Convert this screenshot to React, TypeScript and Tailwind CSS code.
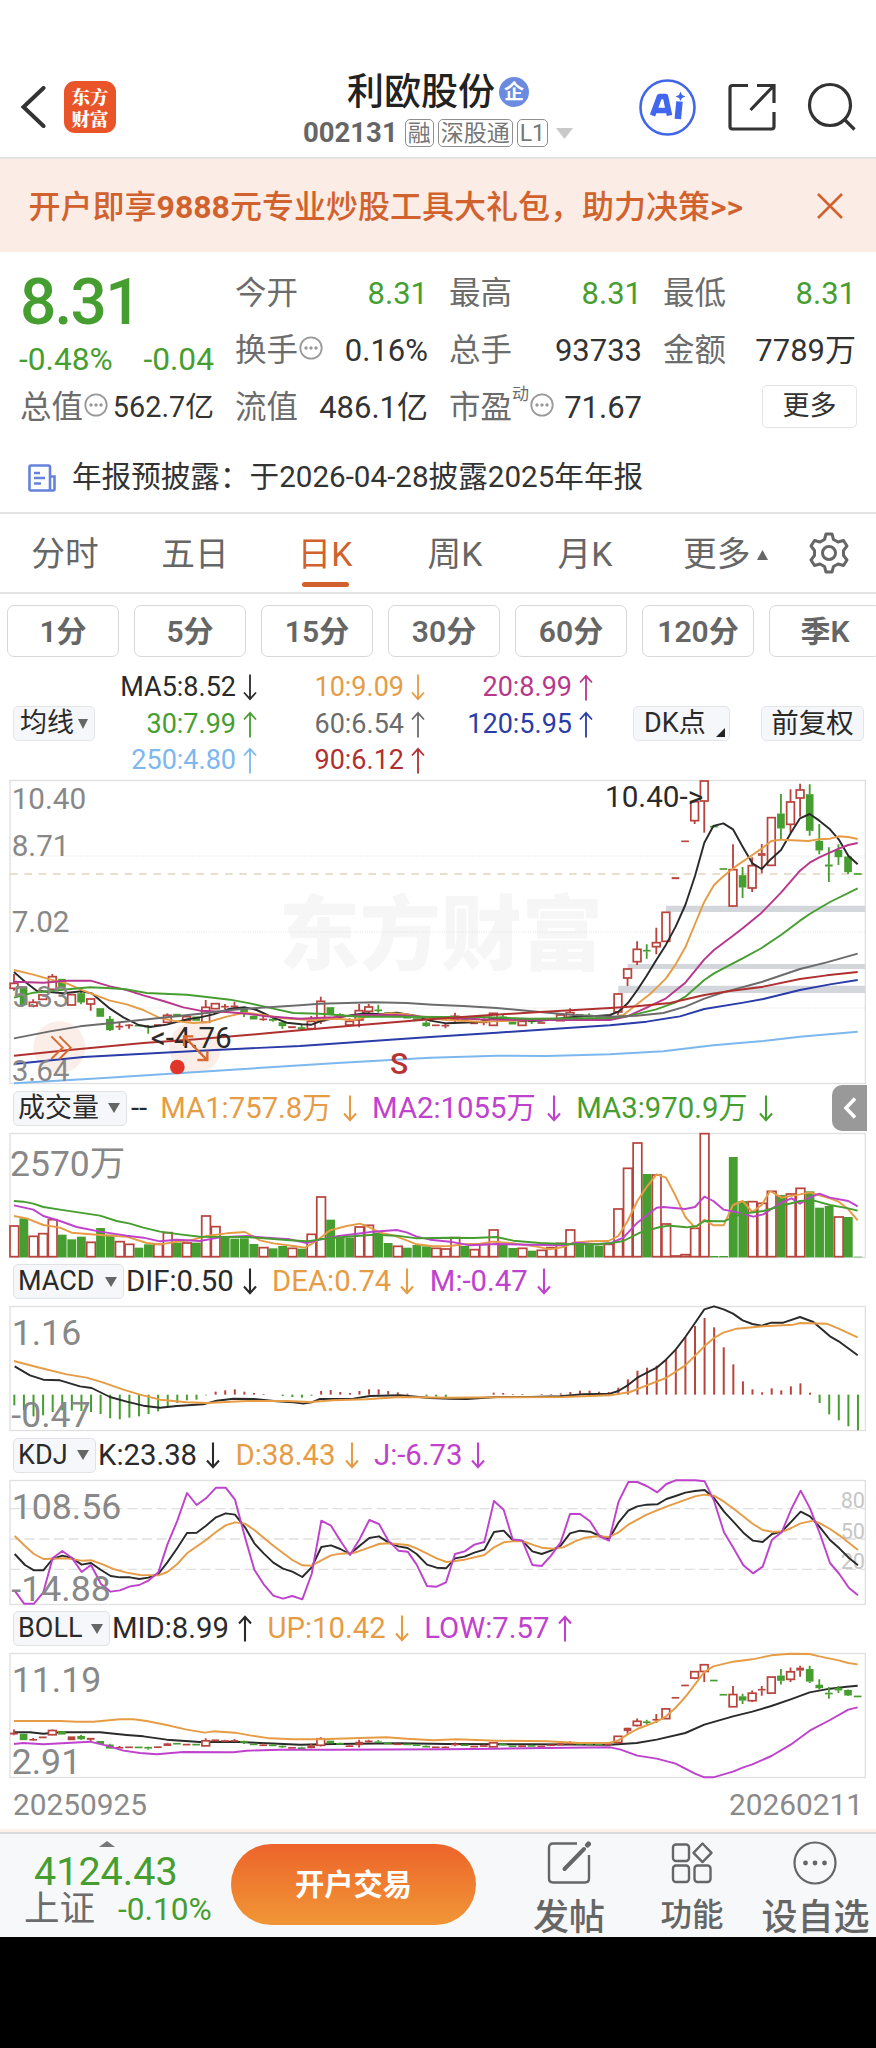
import React from "react";

const GREEN = "#479e30";
const RED = "#b8443e";
const INK = "#2a2a2a";
const ORANGE = "#e69c45";
const VIOLET = "#bf42cd";

const X0 = 42;
const STEP = 28.76;
const cx = (i: number) => X0 + i * STEP;

type Candle = [0 | 1, number, number, number?, number?];

// [rising, bodyTop, bodyBottom, high, low]
const candles: Candle[] = [
  [1, 640, 655, 612, 662], [0, 650, 705], [1, 697, 708, 688, 712], [1, 675, 688], [1, 620, 658, 612, 662],
  [0, 627, 655], [1, 674, 705], [0, 670, 697, 660, 703], [1, 687, 702, 686, 722], [0, 715, 740],
  [0, 747, 780, 738, 783], [1, 768, 771, 758, 780], [1, 764, 768, 762, 776], [0, 765, 768], [0, 768, 771, 765, 791],
  [1, 763, 768], [1, 736, 757, 730, 757], [0, 732, 741], [1, 740, 751], [0, 740, 752],
  [1, 712, 757, 690, 758], [1, 701, 716], [1, 708, 712, 702, 717], [1, 707, 711, 695, 715], [0, 714, 728, 712, 741],
  [0, 738, 748], [1, 746, 750, 737, 752], [0, 747, 752, 743, 755], [0, 757, 768, 753, 776], [1, 769, 774],
  [0, 772, 778, 765, 780], [1, 754, 776, 738, 778], [1, 694, 752, 680, 762], [0, 712, 734], [0, 733, 741, 730, 742],
  [1, 754, 765, 745, 768], [1, 722, 750, 702, 772], [1, 711, 724, 702, 730], [0, 719, 723, 704, 728], [0, 728, 738],
  [1, 737, 740], [0, 738, 745], [0, 745, 752], [0, 758, 768, 753, 770], [1, 764, 767],
  [1, 765, 768, 760, 775], [1, 739, 749, 728, 760], [0, 745, 753], [1, 758, 762], [1, 753, 759, 745, 766],
  [1, 730, 766], [0, 740, 748, 735, 750], [0, 755, 763], [1, 754, 766], [0, 752, 756, 748, 762],
  [1, 757, 760], [1, 746, 752], [1, 735, 752], [1, 728, 742, 715, 745], [0, 733, 742],
  [0, 735, 742, 730, 742], [0, 737, 744], [1, 737, 745], [1, 672, 726, 670, 735], [1, 597, 624, 595, 648],
  [1, 538, 575, 514, 585], [0, 540, 544, 523, 566], [1, 518, 530, 473, 553], [1, 427, 514], [1, 322, 327],
  [1, 212, 216], [1, 95, 152, 92, 162], [1, 33, 93, 33, 188], [0, 168, 172], [0, 295, 299],
  [1, 299, 408, 223, 408], [0, 316, 352, 291, 384], [1, 287, 354, 262, 366], [1, 250, 257, 222, 310], [1, 143, 286],
  [0, 131, 175, 72, 210], [1, 96, 163, 58, 188], [1, 60, 84, 41, 140], [0, 73, 182, 43, 197], [0, 213, 241, 162, 253],
  [0, 284, 289, 232, 336], [0, 240, 261, 223, 285], [0, 260, 306, 255, 312], [0, 310, 314],
];

const volumes: [0 | 1, number][] = [
  [1, 435], [0, 412], [1, 466], [1, 458], [1, 416], [0, 461], [0, 475], [0, 467], [1, 484], [0, 441],
  [0, 461], [1, 482], [1, 490], [0, 500], [0, 490], [1, 490], [1, 455], [0, 485], [1, 486], [0, 485],
  [1, 405], [1, 437], [0, 470], [0, 473], [0, 472], [0, 489], [1, 500], [0, 502], [0, 495], [1, 502],
  [0, 503], [1, 460], [1, 348], [0, 416], [0, 470], [0, 470], [1, 438], [1, 433], [0, 455], [0, 486],
  [1, 496], [0, 500], [0, 492], [0, 496], [1, 502], [1, 504], [1, 470], [0, 495], [1, 506], [1, 490],
  [1, 447], [0, 490], [0, 501], [1, 502], [0, 509], [1, 508], [1, 500], [1, 487], [1, 447], [0, 485],
  [0, 490], [0, 494], [1, 490], [1, 384], [1, 262], [1, 186], [0, 279], [1, 282], [1, 429], [1, 525],
  [1, 521], [1, 442], [1, 158], [0, 525], [0, 525], [0, 228], [0, 360], [1, 362], [1, 367], [1, 331],
  [0, 342], [1, 339], [1, 322], [0, 331], [0, 380], [0, 375], [1, 408], [0, 408], [0, 527],
];

const macdBars = [
  975, 990, 1008, 1005, 995, 990, 990, 992, 995, 1001, 1014, 1017, 1012, 1008, 1001, 993, 977, 968, 960, 958,
  945, 934, 930, 927, 934, 938, 941, 943, 947, 950, 952, 946, 932, 929, 935, 938, 932, 927, 927, 932,
  936, 940, 943, 947, 949, 950, 943, 943, 943, 943, 937, 938, 941, 941, 943, 941, 941, 939, 935, 931,
  931, 934, 935, 922, 897, 871, 862, 856, 838, 808, 770, 737, 713, 741, 801, 852, 903, 927, 936, 924,
  930, 918, 909, 937, 968, 1002, 1020, 1038, 1050,
];

const lines = {
  ma5: "42,606 75,635 110,662 190,670 245,664 275,670 330,716 370,742 416,765 450,771 500,764 560,748 600,742 640,733 690,716 735,712 770,720 818,742 860,758 905,763 935,764 960,754 1000,745 1050,736 1090,730 1140,733 1190,728 1250,738 1290,752 1340,760 1440,756 1480,745 1540,750 1620,752 1690,745 1750,738 1790,738 1830,735 1855,725 1883,700 1912,660 1940,617 1969,570 1998,524 2027,470 2056,405 2085,318 2113,218 2140,168 2170,160 2199,178 2228,230 2257,280 2285,297 2310,270 2343,240 2372,190 2400,145 2429,132 2458,152 2490,178 2516,208 2545,257 2573,283",
  ma10: "42,600 100,614 150,628 200,640 250,662 330,692 380,703 430,720 480,744 520,752 580,759 625,756 680,740 735,728 790,735 850,745 930,750 1010,746 1060,750 1110,738 1170,730 1220,733 1270,742 1340,750 1440,755 1590,750 1750,748 1830,745 1870,735 1912,702 1955,668 1998,625 2027,583 2056,532 2085,462 2113,395 2142,345 2171,318 2210,287 2257,255 2285,236 2314,213 2343,209 2425,213 2455,208 2490,206 2516,199 2545,201 2573,207",
  ma20: "42,635 130,638 200,632 272,632 330,649 380,660 430,676 490,693 550,712 600,722 680,726 740,731 800,739 900,746 1000,742 1080,735 1190,735 1290,742 1440,748 1590,750 1730,750 1830,750 1880,740 1940,713 1998,685 2056,638 2113,568 2142,540 2199,497 2228,475 2285,428 2343,368 2400,302 2429,278 2458,262 2516,236 2545,225 2573,219",
  ma30: "42,683 100,668 180,660 270,652 320,654 380,658 440,669 560,674 620,681 690,689 750,700 820,716 880,729 960,731 1080,740 1190,740 1340,741 1440,741 1590,746 1830,744 1890,737 1969,718 2027,697 2056,680 2113,630 2142,610 2199,580 2228,565 2285,534 2343,495 2400,452 2429,432 2490,396 2573,355",
  ma60: "42,805 150,784 240,769 330,760 500,742 600,731 700,719 770,714 900,706 960,701 1120,697 1220,699 1300,704 1390,708 1490,714 1620,726 1720,735 1830,740 1910,737 1990,729 2056,710 2113,686 2170,667 2285,636 2400,597 2480,577 2573,551",
  ma90: "42,857 200,841 430,819 600,807 800,790 1000,772 1190,756 1300,747 1440,737 1620,726 1830,714 1910,709 2010,699 2113,675 2190,663 2290,650 2400,627 2480,616 2573,606",
  ma120: "42,882 250,861 600,842 900,828 1290,801 1490,788 1690,775 1830,766 1940,755 2040,739 2113,717 2230,698 2290,687 2400,660 2490,643 2573,630",
  ma250: "42,940 300,925 650,902 1000,880 1290,863 1490,857 1640,858 1830,853 1990,844 2140,826 2290,813 2400,800 2573,785",
  vol1: "42,405 80,412 130,432 180,440 215,455 300,462 380,467 440,486 480,490 520,484 570,478 620,465 680,457 735,453 780,478 820,487 880,495 915,500 950,480 990,448 1040,435 1080,428 1110,440 1140,455 1180,463 1220,478 1250,490 1300,496 1350,495 1390,490 1440,488 1480,482 1540,487 1610,497 1650,505 1690,498 1720,485 1770,481 1825,480 1855,465 1883,420 1912,360 1940,318 1970,280 1998,290 2027,345 2056,408 2085,440 2113,416 2140,433 2171,433 2199,372 2228,360 2257,393 2285,372 2310,330 2345,350 2400,340 2429,334 2455,342 2490,352 2516,362 2545,385 2573,418",
  vol2: "42,373 100,386 130,405 180,420 230,438 300,452 380,464 430,470 480,481 530,476 600,480 660,469 740,465 800,470 870,475 920,486 960,476 1010,466 1060,460 1120,452 1190,447 1220,454 1250,467 1290,476 1350,482 1410,493 1490,489 1590,491 1690,493 1730,485 1790,490 1830,487 1870,470 1912,425 1970,380 1990,378 2056,384 2085,378 2113,347 2140,360 2171,386 2215,395 2260,407 2290,400 2314,384 2350,362 2375,352 2400,368 2429,350 2458,338 2490,350 2545,360 2573,376",
  vol3: "42,360 70,362 100,368 130,378 180,386 300,404 350,420 390,428 430,440 480,452 540,460 600,467 740,468 870,478 920,481 960,475 1040,467 1120,461 1190,464 1250,472 1350,470 1420,471 1490,468 1540,479 1620,486 1710,490 1790,490 1830,487 1870,480 1920,455 1980,438 2010,434 2060,439 2090,435 2113,420 2171,421 2220,400 2250,395 2290,390 2343,375 2400,360 2440,358 2490,372 2545,382 2573,389",
  dif: "44,858 90,885 130,898 180,900 240,918 275,923 330,950 380,964 430,976 480,982 530,977 610,972 650,961 700,955 760,956 830,963 880,966 910,970 935,966 960,956 1060,955 1110,947 1200,945 1290,953 1350,955 1400,956 1490,950 1590,950 1680,948 1750,942 1830,940 1855,932 1883,915 1912,892 1970,862 1998,838 2027,808 2056,770 2085,728 2113,687 2142,678 2171,687 2199,700 2228,720 2257,731 2285,736 2314,727 2350,727 2400,710 2440,725 2490,768 2516,783 2573,825",
  dea: "42,842 110,860 200,882 260,892 310,907 370,928 420,943 480,958 560,966 620,968 740,962 860,962 930,965 1000,960 1100,957 1200,950 1340,952 1490,951 1690,950 1830,945 1890,935 1940,915 1998,893 2056,855 2113,798 2142,773 2170,757 2210,745 2290,738 2380,733 2400,728 2480,730 2516,745 2573,771",
  j: "44,480 72,519 102,519 130,485 158,382 187,361 216,382 245,424 273,403 303,460 332,483 360,479 390,467 418,463 445,450 475,425 502,342 532,270 561,187 590,223 618,203 648,171 677,171 705,207 735,320 763,417 791,461 820,495 849,504 877,496 907,506 935,430 964,270 993,285 1021,330 1050,373 1079,325 1108,268 1137,280 1165,330 1195,360 1223,363 1250,402 1281,466 1310,468 1338,455 1365,370 1394,362 1423,342 1453,334 1482,211 1511,237 1538,326 1567,330 1597,403 1625,406 1653,375 1682,335 1710,250 1740,250 1770,272 1800,318 1827,330 1856,212 1885,154 1912,154 1940,166 1972,185 1999,160 2027,149 2085,149 2114,152 2142,210 2172,305 2202,355 2230,404 2259,428 2288,408 2316,327 2345,305 2374,235 2402,180 2430,233 2460,310 2490,397 2518,430 2547,472 2574,494",
  k: "44,370 75,403 102,419 130,419 158,385 187,375 216,382 245,402 273,397 303,418 332,436 360,440 390,440 418,445 445,441 475,430 502,395 532,352 561,307 590,306 618,285 648,260 677,248 705,252 735,290 763,338 791,368 820,396 849,414 877,423 907,439 935,410 964,349 993,344 1021,355 1050,370 1079,345 1108,322 1137,317 1165,335 1195,347 1223,352 1250,370 1281,402 1310,411 1338,413 1365,383 1394,378 1423,366 1453,357 1482,304 1511,300 1538,328 1567,330 1597,362 1625,370 1653,360 1682,345 1710,308 1740,300 1770,303 1800,316 1827,325 1856,275 1885,240 1912,227 1940,222 1972,221 1999,205 2027,196 2056,186 2085,181 2114,178 2142,202 2172,243 2202,275 2230,306 2259,330 2288,334 2316,310 2345,303 2374,273 2402,243 2430,257 2460,290 2490,328 2518,353 2547,382 2574,404",
  d: "44,316 75,346 102,370 130,385 200,383 245,390 275,389 310,402 340,415 380,426 420,433 475,434 502,424 532,400 561,368 618,328 648,304 677,284 705,275 735,279 763,298 820,345 877,388 907,404 935,405 964,389 993,374 1021,369 1060,367 1090,357 1137,340 1165,338 1223,343 1250,353 1310,383 1340,394 1394,387 1453,373 1482,350 1511,335 1538,332 1567,331 1597,342 1625,351 1660,354 1690,350 1725,332 1755,321 1790,317 1827,319 1856,305 1885,282 1940,252 1999,228 2085,197 2114,192 2142,195 2172,213 2202,235 2259,280 2288,298 2320,304 2350,302 2374,292 2402,278 2440,270 2460,278 2490,295 2518,314 2574,358",
  up: "42,872 180,872 230,874 280,874 360,867 400,867 440,872 500,884 560,898 615,907 640,903 705,907 750,915 810,924 880,927 960,927 1080,923 1160,921 1220,925 1300,930 1370,927 1490,931 1640,933 1740,938 1830,937 1855,930 1883,912 1912,896 1970,874 1998,858 2027,832 2056,800 2085,762 2113,725 2140,708 2199,694 2257,687 2314,675 2370,670 2429,671 2458,678 2516,690 2545,698 2573,702",
  mid: "42,906 90,906 130,910 180,906 300,906 380,914 430,918 500,928 600,935 700,934 800,939 900,943 1000,941 1200,939 1340,941 1590,942 1830,943 1910,938 1970,928 2056,908 2113,883 2199,858 2257,844 2314,827 2372,807 2429,786 2490,775 2540,769 2573,766",
  low: "42,941 70,938 130,942 200,938 270,934 320,946 370,961 420,968 470,972 550,965 700,966 740,961 840,958 1000,958 1340,957 1490,955 1830,951 1860,957 1912,976 1970,985 2027,1000 2085,1030 2113,1041 2140,1041 2199,1024 2228,1012 2257,1002 2314,977 2372,943 2429,901 2490,869 2545,838 2573,831",
};

function Line({ points, color, w = 5.8 }: { points: string; color: string; w?: number }) {
  return <polyline points={points} fill="none" stroke={color} strokeWidth={w} strokeLinejoin="round" />;
}

function Plot({ top, height, children }: { top: number; height: number; children: React.ReactNode }) {
  return (
    <svg
      viewBox={`0 ${top} 2628 ${height * 3}`}
      width="876"
      height={height}
      className="block shrink-0 overflow-visible"
      fontFamily="Roboto, 'Noto Sans CJK SC', sans-serif"
    >
      <rect x="30" y={top + 1.5} width="2566" height={height * 3 - 3} fill="none" stroke="#e0e0e0" strokeWidth="4" />
      {children}
    </svg>
  );
}

function Candles({ map, minHollow }: { map: (y: number) => number; minHollow: number }) {
  return (
    <g>
      {candles.map(([up, a, b, hi, lo], i) => {
        const t = map(a);
        const h = Math.max(map(b) - t, 4);
        const c = up ? RED : GREEN;
        const x = cx(i);
        const hollow = up === 1 && h > minHollow;
        return (
          <g key={i}>
            {hi !== undefined && lo !== undefined && (
              <path d={`M${x} ${map(hi)}V${t}M${x} ${t + h}V${map(lo)}`} stroke={c} strokeWidth="5.500" />
            )}
            {hollow ? (
              <rect x={x - 11.5} y={t} width="23" height={h} fill="#fff" stroke={c} strokeWidth="5.200" />
            ) : (
              <rect x={x - 11.5} y={t - 0.5} width="23" height={h + 1} fill={c} />
            )}
          </g>
        );
      })}
    </g>
  );
}

function Arrow({ up, small }: { up?: boolean; small?: boolean }) {
  return (
    <svg width="14" height="27" viewBox="0 0 14 27" fill="none" stroke="currentColor" strokeWidth={small ? 1.8 : 2.1} className="shrink-0">
      {up ? <path d="M7 26.5V1.5M1 8.5L7 1.8L13 8.5" /> : <path d="M7 .5V25.5M1 18.5L7 25.2L13 18.5" />}
    </svg>
  );
}

function MoreDots() {
  return (
    <svg width="24" height="24" viewBox="0 0 24 24" className="-mt-[5px] ml-px shrink-0">
      <circle cx="12" cy="12" r="10.700" fill="none" stroke="#999" strokeWidth="1.800" />
      <circle cx="7" cy="12" r="1.700" fill="#999" />
      <circle cx="12" cy="12" r="1.700" fill="#999" />
      <circle cx="17" cy="12" r="1.700" fill="#999" />
    </svg>
  );
}

function Tag({ children }: { children: React.ReactNode }) {
  return (
    <span className="flex h-[28px] shrink-0 items-center rounded-[5px] border-[1.5px] border-[#8f8f8f] px-[2px] text-[23px] whitespace-nowrap text-[#777]">
      {children}
    </span>
  );
}

function Header() {
  return (
    <header className="flex h-[159px] shrink-0 items-start border-b-2 border-[#e2e2e2] pt-[68px]">
      <div className="flex h-[78px] w-[300px] items-center pl-[20px]">
        <svg width="26" height="42" viewBox="0 0 26 42" fill="none" stroke="#333" strokeWidth="4" strokeLinecap="round">
          <path d="M23.500 2L3.500 21L23.500 40" />
        </svg>
        <div className="ml-[18px] flex h-[52px] w-[52px] flex-col items-center justify-center rounded-[11px] bg-[#e95529] font-['Noto_Serif_CJK_SC','Noto_Sans_CJK_SC',serif] text-[18.500px] leading-[22px] font-black text-white">
          <span>东方</span>
          <span>财富</span>
        </div>
      </div>
      <div className="flex w-[276px] flex-col items-center">
        <div className="flex h-[46px] items-center gap-[4px] pt-[3px]">
          <h1 className="text-[37px] font-medium text-[#222]">利欧股份</h1>
          <span className="-mt-[2px] flex h-[30px] w-[30px] items-center justify-center rounded-full bg-[#6a8be0] text-[20px] font-bold text-white">企</span>
        </div>
        <div className="flex h-[36px] items-center gap-[4px] pt-[2px]">
          <span className="mr-[3px] text-[27.500px] font-bold text-[#666]">002131</span>
          <Tag>融</Tag>
          <Tag>深股通</Tag>
          <Tag>L1</Tag>
          <svg width="17" height="11" viewBox="0 0 17 11" className="ml-[4px]"><path d="M0 0H17L8.500 11Z" fill="#c9c9c9" /></svg>
        </div>
      </div>
      <div className="flex h-[78px] flex-1 items-center pl-[62.500px]">
        <svg width="57" height="57" viewBox="0 0 57 57">
          <circle cx="28.500" cy="28.500" r="27" fill="#fff" stroke="#4167e6" strokeWidth="2.600" />
          <path d="M13.500 36.500L20.500 17.500H26.500L30.500 36.500M17 31.500H29" fill="none" stroke="#4167f0" strokeWidth="5.600" strokeLinejoin="round" />
          <path d="M40.500 22.500L38.800 40" stroke="#4167f0" strokeWidth="6.500" />
          <path d="M41.500 12.500L43 16L46.500 17.500L43 19L41.500 22L40 19L36.500 17.500L40 16Z" fill="#4167f0" />
        </svg>
        <svg width="48" height="48" viewBox="0 0 48 48" fill="none" stroke="#333" strokeWidth="3.200" className="ml-[32px]">
          <path d="M20 2.500H4.500Q2 2.500 2 5V43.500Q2 46 4.500 46H43.500Q46 46 46 43.500V29M29 2.500H46V20M45 3.500L22.500 27" />
        </svg>
        <svg width="50" height="50" viewBox="0 0 50 50" fill="none" stroke="#333" strokeWidth="3.200" className="ml-[31px]">
          <circle cx="23" cy="23" r="20.500" />
          <path d="M37.500 37.500L47.500 47.500" />
        </svg>
      </div>
    </header>
  );
}

function Banner() {
  return (
    <div className="flex h-[93px] shrink-0 items-center justify-between bg-[#fbece5] pr-[33px] pl-[28.500px] text-[#d1622d]">
      <span className="pt-[2px] text-[32px] font-medium whitespace-nowrap">
        开户即享<span className="font-bold">9888</span>元专业炒股工具大礼包，助力决策&gt;&gt;
      </span>
      <svg width="26" height="26" viewBox="0 0 26 26" fill="none" stroke="currentColor" strokeWidth="2.600">
        <path d="M1 1L25 25M25 1L1 25" />
      </svg>
    </div>
  );
}

function Stat({ label, value, green, dots, sup }: { label: string; value: string; green?: boolean; dots?: boolean; sup?: string }) {
  return (
    <div className="flex h-[57px] w-[193px] items-center">
      <span className="text-[31.500px] text-[#6c6c6c]">{label}</span>
      {sup && <span className="-mt-[26px] text-[17px] text-[#6c6c6c]">{sup}</span>}
      {dots && <MoreDots />}
      <span className={green ? "ml-auto text-[31px] text-[#479e30]" : "ml-auto text-[31px] text-[#333]"}>{value}</span>
    </div>
  );
}

function Quote() {
  return (
    <section className="h-[262px] shrink-0 border-b-2 border-[#e2e2e2]">
      <div className="flex h-[189px] pt-[13px] pl-[20px]">
        <div className="w-[194px] shrink-0">
          <div className="flex h-[76px] items-center text-[64px] font-medium tracking-[-1.8px] text-[#479e30]">8.31</div>
          <div className="-ml-[1px] flex h-[38px] items-center justify-between text-[31.700px] text-[#479e30]">
            <span>-0.48%</span>
            <span>-0.04</span>
          </div>
          <div className="flex h-[57px] items-center">
            <span className="text-[31.500px] text-[#6c6c6c]">总值</span>
            <MoreDots />
            <span className="ml-auto text-[28.800px] text-[#333]">562.7亿</span>
          </div>
        </div>
        <div className="ml-[21px] flex flex-col">
          <div className="flex gap-[21px]">
            <Stat label="今开" value="8.31" green />
            <Stat label="最高" value="8.31" green />
            <Stat label="最低" value="8.31" green />
          </div>
          <div className="flex gap-[21px]">
            <Stat label="换手" value="0.16%" dots />
            <Stat label="总手" value="93733" />
            <Stat label="金额" value="7789万" />
          </div>
          <div className="flex items-center gap-[21px]">
            <Stat label="流值" value="486.1亿" />
            <Stat label="市盈" value="71.67" dots sup="动" />
            <button className="-mt-[2px] ml-[99px] flex h-[43px] w-[95px] items-center justify-center rounded-[5px] border-[1.5px] border-[#e4e4e4] text-[27px] text-[#333]">更多</button>
          </div>
        </div>
      </div>
      <div className="flex h-[72px] items-center pt-[2px] pl-[28px]">
        <svg width="28" height="28" viewBox="0 0 28 28" fill="none" stroke="#6482dc" strokeWidth="2.600">
          <path d="M22 26.500H3Q1.500 26.500 1.500 25V3Q1.500 1.500 3 1.500H20.500Q22 1.500 22 3V26.500H25Q26.500 26.500 26.500 25V12.500H22M6 9H12M6 14H17M6 19.500H13" />
        </svg>
        <span className="ml-[16px] text-[29.600px] whitespace-nowrap text-[#333]">年报预披露：于2026-04-28披露2025年年报</span>
      </div>
    </section>
  );
}

function Tabs() {
  return (
    <nav className="flex h-[80px] shrink-0 border-b-2 border-[#e2e2e2] text-[33.700px] text-[#666]">
      {["分时", "五日", "日K", "周K", "月K"].map((t) => (
        <div key={t} className={t === "日K" ? "flex w-[130px] flex-col items-center text-[#d1622d]" : "flex w-[130px] flex-col items-center"}>
          <span className="flex h-[68px] items-center pt-[13px]">{t}</span>
          {t === "日K" && <span className="h-[5px] w-[47px] rounded-full bg-[#d1622d]" />}
        </div>
      ))}
      <div className="ml-[33px] flex h-[68px] items-center gap-[7px] pt-[13px]">
        <span>更多</span>
        <svg width="11" height="10" viewBox="0 0 11 10"><path d="M0 10H11L5.500 0Z" fill="#666" /></svg>
      </div>
      <svg width="42" height="42" viewBox="0 0 42 42" className="mt-[18px] ml-[40px]" fill="none" stroke="#666" strokeWidth="3" strokeLinejoin="round">
        <path d="M18 2H24L25.500 7.500L30 10L35.500 8.500L39 14L35.500 18.500V23.500L39 28L35.500 33.500L30 32L25.500 34.500L24 40H18L16.500 34.500L12 32L6.500 33.500L3 28L6.500 23.500V18.500L3 14L6.500 8.500L12 10L16.500 7.500Z" />
        <circle cx="21" cy="21" r="6.500" />
      </svg>
    </nav>
  );
}

function Periods() {
  return (
    <div className="flex h-[73px] shrink-0 gap-[15px] overflow-hidden pt-[11px] pl-[7px]">
      {["1分", "5分", "15分", "30分", "60分", "120分", "季K"].map((p) => (
        <button key={p} className="flex h-[52px] w-[112px] shrink-0 items-center justify-center rounded-[7px] border-[1.5px] border-[#d8d8d8] pt-[2px] text-[30px] font-bold text-[#666]">
          <span className="[font-weight:600]">{p}</span>
        </button>
      ))}
    </div>
  );
}

const averages: [string, boolean, string][] = [
  ["MA5:8.52", false, "text-[#2a2a2a]"],
  ["10:9.09", false, "text-[#e69c45]"],
  ["20:8.99", true, "text-[#b8378c]"],
  ["30:7.99", true, "text-[#479e30]"],
  ["60:6.54", true, "text-[#6c6c6c]"],
  ["120:5.95", true, "text-[#2a3ca8]"],
  ["250:4.80", true, "text-[#7cb8ee]"],
  ["90:6.12", true, "text-[#b03030]"],
];

function Averages() {
  return (
    <div className="flex h-[113px] shrink-0 items-center">
      <button className="ml-[13px] flex h-[35px] w-[82px] items-center justify-center gap-[4px] rounded-[5px] border border-[#e3e5e9] bg-[#f6f7fa] text-[27px] text-[#2a2a2a]">
        均线
        <svg width="10" height="10" viewBox="0 0 10 10"><path d="M0 0H10L5 10Z" fill="#666" /></svg>
      </button>
      <div className="grid w-[499px] grid-cols-[162px_168px_168px] pt-px text-[27px]">
        {averages.map(([t, up, c]) => (
          <span key={t} className={`flex h-[36.500px] items-center justify-end gap-[7px] ${c}`}>
            {t}
            <Arrow up={up} small />
          </span>
        ))}
      </div>
      <button className="ml-[39px] flex h-[35px] w-[97px] items-center rounded-[5px] border border-[#e3e5e9] bg-[#f6f7fa] pl-[10px] text-[27px] text-[#2a2a2a]">
        DK点
        <svg width="9" height="9" viewBox="0 0 9 9" className="mt-[18px] ml-[10px]"><path d="M9 0V9H0Z" fill="#222" /></svg>
      </button>
      <button className="ml-[31px] flex h-[35px] w-[103px] items-center justify-center rounded-[5px] border border-[#e3e5e9] bg-[#f6f7fa] text-[27.500px] text-[#2a2a2a]">前复权</button>
    </div>
  );
}

function PriceChart() {
  return (
    <Plot top={30} height={304}>
      <text x="836" y="580" fontSize="243" fontWeight="900" fill="#f6f6f6">东方财富</text>
      <path d="M30 258H2596M30 486H2596M30 714H2596" stroke="#e2e2e2" strokeWidth="3" strokeDasharray="3 4" />
      <path d="M30 312H2596" stroke="#e3d4c0" strokeWidth="5" strokeDasharray="23 20" />
      <path d="M1998 416.500H2596" stroke="#d3d7dc" strokeWidth="19" />
      <path d="M1883 589.500H2596" stroke="#d3d7dc" strokeWidth="15" />
      <path d="M1855 658H2596" stroke="#d3d7dc" strokeWidth="22" />
      <circle cx="178" cy="832" r="78" fill="#fbeee8" />
      <circle cx="585" cy="832" r="78" fill="#fbeee8" />
      <Candles map={(y) => y} minHollow={9} />
      <Line points={lines.ma5} color={INK} />
      <Line points={lines.ma10} color={ORANGE} />
      <Line points={lines.ma20} color="#b8378c" />
      <Line points={lines.ma30} color={GREEN} />
      <Line points={lines.ma60} color="#6c6c6c" />
      <Line points={lines.ma90} color="#b03030" />
      <Line points={lines.ma120} color="#2a3ca8" />
      <Line points={lines.ma250} color="#7cb8ee" />
      <g fontSize="89" fill="#888">
        <text x="35" y="118">10.40</text>
        <text x="35" y="257">8.71</text>
        <text x="35" y="486">7.02</text>
        <text x="35" y="712">5.33</text>
        <text x="35" y="932">3.64</text>
      </g>
      <g fontSize="89" fill={INK}>
        <text x="452" y="833">&lt;-4.76</text>
        <text x="1815" y="112">10.40-&gt;</text>
      </g>
      <path d="M154 799L188 833L154 867M178 799L212 833L178 867" fill="none" stroke="#d9692f" strokeWidth="6" />
      <path d="M552 828V799H580M554 801L620 869M622 842V870H592" fill="none" stroke="#d9692f" strokeWidth="7" />
      <circle cx="532" cy="891" r="22" fill="#e0352b" />
      <text x="1197" y="911" fontSize="90" fontWeight="500" fill="#b8332f" textAnchor="middle">S</text>
    </Plot>
  );
}

function VolumeChart() {
  return (
    <Plot top={156} height={125}>
      {volumes.map(([up, y], i) =>
        up ? (
          <rect key={i} x={cx(i) - 12} y={y} width="26" height={Math.max(527 - y, 1)} fill="#fff" stroke={RED} strokeWidth="5.200" />
        ) : (
          <rect key={i} x={cx(i) - 12.5} y={y} width="26.500" height={529 - y} fill={GREEN} />
        ),
      )}
      <Line points={lines.vol1} color={ORANGE} />
      <Line points={lines.vol2} color={VIOLET} />
      <Line points={lines.vol3} color={GREEN} />
      <text x="30" y="284" fontSize="106.500" fill="#888">2570万</text>
    </Plot>
  );
}

function MacdChart() {
  return (
    <Plot top={677} height={125}>
      {macdBars.map((y, i) =>
        y === 943 ? null : (
          <rect key={i} x={cx(i) - 2} y={Math.min(y, 943)} width="6" height={Math.abs(y - 943)} fill={y < 943 ? RED : GREEN} />
        ),
      )}
      <Line points={lines.dif} color={INK} />
      <Line points={lines.dea} color={ORANGE} />
      <text x="35" y="795" fontSize="107" fill="#888">1.16</text>
      <text x="34" y="1040" fontSize="107" fill="#888">-0.47</text>
    </Plot>
  );
}

function KdjChart() {
  return (
    <Plot top={148} height={125}>
      <path d="M30 234H2596M30 325H2596M30 416H2596" stroke="#e0e0e0" strokeWidth="4" strokeDasharray="30 14" />
      <g fontSize="65" fill="#c6c6c6" textAnchor="end">
        <text x="2595" y="232">80</text>
        <text x="2595" y="324">50</text>
        <text x="2595" y="415">20</text>
      </g>
      <Line points={lines.k} color={INK} />
      <Line points={lines.d} color={ORANGE} />
      <Line points={lines.j} color={VIOLET} />
      <text x="35" y="265" fontSize="107" fill="#888">108.56</text>
      <text x="34" y="512" fontSize="107" fill="#888">-14.88</text>
    </Plot>
  );
}

function BollChart() {
  return (
    <Plot top={668} height={125}>
      <Line points={lines.mid} color={INK} />
      <Candles map={(y) => 797 + (y - 312) * 0.336} minHollow={11} />
      <Line points={lines.up} color={ORANGE} />
      <Line points={lines.low} color={VIOLET} />
      <text x="35" y="785" fontSize="107" fill="#888">11.19</text>
      <text x="35" y="1031" fontSize="107" fill="#888">2.91</text>
    </Plot>
  );
}

function IndicatorBar({ name, width, prefix, items, tab }: { name: string; width: string; prefix?: string; items: [string, string, boolean][]; tab?: boolean }) {
  return (
    <div className="flex h-[48.500px] shrink-0 items-center pl-[13px] text-[29.300px] whitespace-nowrap text-[#2a2a2a]">
      <button className={`flex h-[35px] shrink-0 items-center justify-between rounded-[5px] border border-[#e0e2e6] bg-[#f6f7fa] pr-[6px] pl-[4px] text-[27px] ${width}`}>
        {name}
        <svg width="12" height="10" viewBox="0 0 12 10"><path d="M0 0H12L6 10Z" fill="#666" /></svg>
      </button>
      {prefix && <span className="mr-[11px] ml-[4px]">{prefix}</span>}
      <div className="ml-[2px] flex gap-[15.500px]">
        {items.map(([t, c, up]) => (
          <span key={t} className={`flex items-center ${prefix ? "gap-[11px]" : "gap-[9px]"} ${c}`}>
            {t}
            <Arrow up={up} />
          </span>
        ))}
      </div>
      {tab && (
        <div className="mr-[9px] ml-auto flex h-[46px] w-[35px] items-center justify-center rounded-l-[10px] bg-[#999]">
          <svg width="14" height="22" viewBox="0 0 14 22" fill="none" stroke="#fff" strokeWidth="3.500"><path d="M12 1.500L3 11L12 20.500" /></svg>
        </div>
      )}
    </div>
  );
}

const cInk = "text-[#2a2a2a]";
const cOrange = "text-[#e69c45]";
const cViolet = "text-[#bf42cd]";
const cGreen = "text-[#479e30]";

function BottomBar() {
  return (
    <footer className="flex h-[105px] shrink-0 border-t-2 border-[#d9dcdf] bg-[#f7f8fa]">
      <div className="flex w-[231px] flex-col pl-[24px]">
        <svg width="16" height="6" viewBox="0 0 16 6" className="mt-[7px] ml-[75px]"><path d="M0 6L8 0L16 6Z" fill="#777" /></svg>
        <span className="mt-[5px] flex h-[39px] items-center pl-[10px] text-[39.500px] text-[#479e30]">4124.43</span>
        <div className="flex h-[38px] items-center">
          <span className="text-[35.500px] text-[#6c6c6c]">上证</span>
          <span className="ml-[23px] text-[31.700px] text-[#479e30]">-0.10%</span>
        </div>
      </div>
      <button className="mt-[10px] flex h-[81px] w-[245px] items-center justify-center rounded-full bg-linear-to-b from-[#ec632b] to-[#f09636] pt-[2px] text-[29.300px] font-bold text-white">开户交易</button>
      <div className="ml-[33px] flex w-[120px] flex-col items-center pt-[7px]">
        <svg width="44" height="44" viewBox="0 0 44 44" fill="none" stroke="#666" strokeWidth="2.400">
          <path d="M30 2.500H6Q2 2.500 2 6.500V37.500Q2 41.500 6 41.500H38Q42 41.500 42 37.500V14" />
          <path d="M37 8L17.500 28" strokeWidth="4" strokeLinecap="round" />
          <path d="M40.500 4L41.500 3" strokeWidth="5" strokeLinecap="round" />
        </svg>
        <span className="mt-[15px] text-[36px] font-medium text-[#666]">发帖</span>
      </div>
      <div className="flex w-[126px] flex-col items-center pt-[8px]">
        <svg width="42" height="42" viewBox="0 0 42 42" fill="none" stroke="#666" strokeWidth="2.400">
          <rect x="2" y="2.500" width="16" height="16.500" rx="3" />
          <rect x="2" y="23.500" width="16" height="16.500" rx="3" />
          <rect x="23.500" y="23.500" width="16" height="16.500" rx="3" />
          <path d="M31.500 1.500L40.500 10.800L31.500 20.100L22.500 10.800Z" strokeLinejoin="round" />
        </svg>
        <span className="mt-[16px] text-[31.500px] font-medium text-[#666]">功能</span>
      </div>
      <div className="flex w-[121px] flex-col items-center pt-[7px]">
        <svg width="44" height="44" viewBox="0 0 44 44" className="-ml-[2px]">
          <circle cx="22" cy="22" r="20.500" fill="none" stroke="#666" strokeWidth="2.200" />
          <circle cx="12.500" cy="22" r="2.400" fill="#666" />
          <circle cx="22" cy="22" r="2.400" fill="#666" />
          <circle cx="31.500" cy="22" r="2.400" fill="#666" />
        </svg>
        <span className="mt-[15px] text-[36px] font-medium whitespace-nowrap text-[#666]">设自选</span>
      </div>
    </footer>
  );
}

export default function App() {
  return (
    <div className="flex h-[2048px] w-[876px] flex-col overflow-hidden bg-white font-['Roboto','Noto_Sans_CJK_SC',sans-serif] leading-none [&_button]:leading-none">
      <Header />
      <Banner />
      <Quote />
      <Tabs />
      <Periods />
      <Averages />
      <PriceChart />
      <IndicatorBar
        name="成交量"
        width="w-[114px]"
        prefix="--"
        tab
        items={[["MA1:757.8万", cOrange, false], ["MA2:1055万", cViolet, false], ["MA3:970.9万", cGreen, false]]}
      />
      <VolumeChart />
      <IndicatorBar name="MACD" width="w-[111px]" items={[["DIF:0.50", cInk, false], ["DEA:0.74", cOrange, false], ["M:-0.47", cViolet, false]]} />
      <MacdChart />
      <IndicatorBar name="KDJ" width="w-[83px]" items={[["K:23.38", cInk, false], ["D:38.43", cOrange, false], ["J:-6.73", cViolet, false]]} />
      <KdjChart />
      <IndicatorBar name="BOLL" width="w-[97px]" items={[["MID:8.99", cInk, true], ["UP:10.42", cOrange, false], ["LOW:7.57", cViolet, true]]} />
      <BollChart />
      <div className="flex h-[54px] shrink-0 items-center justify-between border-b-[3px] border-[#fdf1ea] pt-[2px] pr-[13px] pl-[13px] text-[29.800px] text-[#8a8a8a]">
        <span>20250925</span>
        <span>20260211</span>
      </div>
      <BottomBar />
      <div className="flex-1 bg-black" />
    </div>
  );
}
